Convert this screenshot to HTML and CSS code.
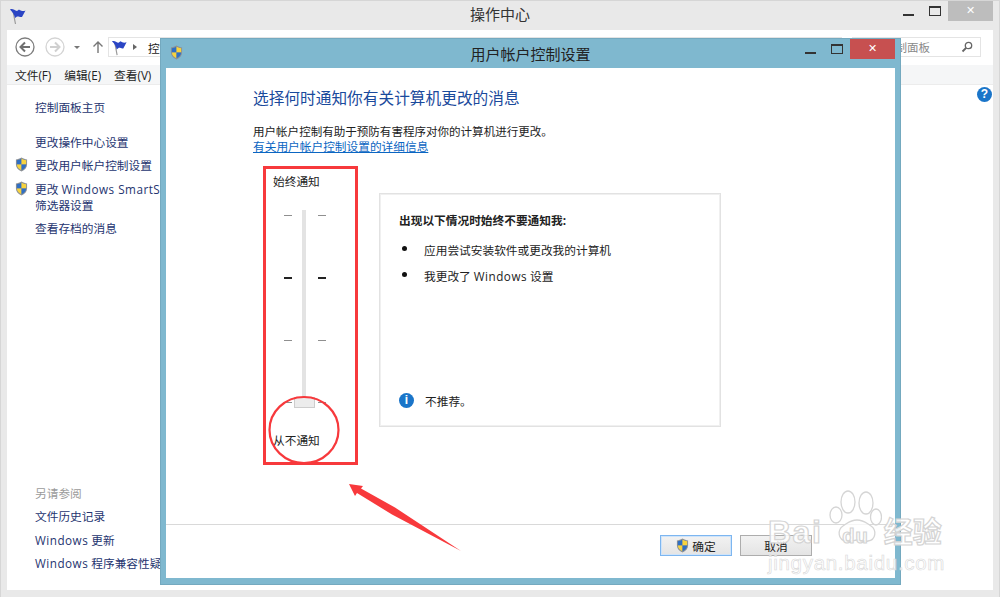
FILE: index.html
```html
<!DOCTYPE html>
<html lang="zh-CN">
<head>
  <meta charset="UTF-8">
  <title>用户帐户控制设置</title>
  <link rel="stylesheet" href="styles.css">
</head>
<body>
  <svg class="defs" width="0" height="0">
    <symbol id="shield" viewBox="0 0 14 16">
      <path d="M7 0.500C5 1.800 3 2.400 1 2.500V8c0 3.600 2.600 6 6 7.500 3.400-1.500 6-3.900 6-7.500V2.500C11 2.400 9 1.800 7 0.500z" fill="#8a8f96"/>
      <path d="M7 1.500V8H2V3.300C3.800 3.100 5.400 2.600 7 1.500z" fill="#2f6fc4"/>
      <path d="M7 1.500V8h5V3.300C10.200 3.100 8.600 2.600 7 1.500z" fill="#f7d33e"/>
      <path d="M2 8h5v6.300C4.200 13 2.200 11 2 8z" fill="#f7d33e"/>
      <path d="M12 8H7v6.300C9.800 13 11.800 11 12 8z" fill="#2f6fc4"/>
    </symbol>
    <symbol id="flag" viewBox="0 0 18 18">
      <path d="M4 4L6.500 17" stroke="#9a9a9a" stroke-width="1.200" fill="none"/>
      <path d="M1 2.500C3.500 1 5.500 3.500 8 4L10 2.500C12 4 14 4.500 16.500 3.500L13 10C11 10.500 9.500 9 8 9.500L6 11C5.500 8 3.500 5 1 2.500z" fill="#2b45c4"/>
    </symbol>
  </svg>

  <div class="window">
    <header class="titlebar">
      <svg class="title-flag"><use href="#flag"/></svg>
      <span class="title">操作中心</span>
      <div class="caption">
        <span class="cap-min"></span>
        <span class="cap-max"></span>
        <span class="cap-close">✕</span>
      </div>
    </header>

    <div class="client">
      <div class="toolbar">
        <svg class="nav-btn" viewBox="0 0 20 20">
          <circle cx="10" cy="10" r="9" fill="#fff" stroke="#7d7d7d" stroke-width="1.300"/>
          <path d="M15 10H6M10 5.500L5.500 10l4.500 4.500" fill="none" stroke="#6f6f6f" stroke-width="2"/>
        </svg>
        <svg class="nav-btn forward" viewBox="0 0 20 20">
          <circle cx="10" cy="10" r="9" fill="#fff" stroke="#d4d4d4" stroke-width="1.300"/>
          <path d="M5 10h9M10 5.500l4.500 4.500-4.500 4.500" fill="none" stroke="#d0d0d0" stroke-width="2"/>
        </svg>
        <span class="nav-drop"></span>
        <svg class="nav-up" viewBox="0 0 12 14">
          <path d="M6 13V2M1.500 6.500L6 2l4.500 4.500" fill="none" stroke="#777" stroke-width="1.400"/>
        </svg>
        <div class="address">
          <svg class="address-flag"><use href="#flag"/></svg>
          <span class="crumb-arrow"></span>
          <span>控制面板</span>
        </div>
        <div class="search">
          <span class="search-text">搜索控制面板</span>
          <svg class="search-icon" viewBox="0 0 12 12">
            <circle cx="7.500" cy="4.500" r="3.200" fill="none" stroke="#666" stroke-width="1.300"/>
            <path d="M5 7L1.500 10.500" stroke="#666" stroke-width="1.800"/>
          </svg>
        </div>
      </div>

      <nav class="menubar">
        <span>文件(F)</span>
        <span>编辑(E)</span>
        <span>查看(V)</span>
      </nav>

      <div class="content">
        <aside class="sidebar">
          <div class="side-group">
            <a class="side-home">控制面板主页</a>
            <a>更改操作中心设置</a>
            <a class="shielded"><svg class="side-shield"><use href="#shield"/></svg>更改用户帐户控制设置</a>
            <a class="shielded"><svg class="side-shield"><use href="#shield"/></svg>更改 <span class="latin">Windows SmartScreen</span><br>筛选器设置</a>
            <a>查看存档的消息</a>
          </div>
          <div class="side-group see-also">
            <span class="side-head">另请参阅</span>
            <a>文件历史记录</a>
            <a><span class="latin">Windows</span> 更新</a>
            <a><span class="latin">Windows</span> 程序兼容性疑难解答</a>
          </div>
        </aside>
        <div class="help">?</div>
      </div>
    </div>
  </div>

  <section class="dialog">
    <header class="dlg-titlebar">
      <svg class="dlg-shield"><use href="#shield"/></svg>
      <span class="dlg-title">用户帐户控制设置</span>
      <div class="caption dlg-caption">
        <span class="cap-min"></span>
        <span class="cap-max"></span>
        <span class="cap-close red">✕</span>
      </div>
    </header>

    <div class="dlg-client">
      <div class="dlg-main">
        <h1>选择何时通知你有关计算机更改的消息</h1>
        <p class="desc">用户帐户控制有助于预防有害程序对你的计算机进行更改。</p>
        <a class="more">有关用户帐户控制设置的详细信息</a>

        <div class="settings">
          <div class="slider-box">
            <div class="slider-label">始终通知</div>
            <div class="scale">
              <div class="ticks">
                <i></i><i class="major"></i><i></i><i></i>
              </div>
              <div class="track"></div>
              <div class="ticks">
                <i></i><i class="major"></i><i></i><i></i>
              </div>
              <div class="thumb"></div>
            </div>
            <div class="slider-label bottom">从不通知</div>
          </div>

          <div class="panel">
            <div class="panel-title">出现以下情况时始终不要通知我:</div>
            <ul>
              <li>应用尝试安装软件或更改我的计算机</li>
              <li>我更改了 <span class="latin">Windows</span> 设置</li>
            </ul>
            <div class="note">
              <span class="info">i</span>
              <span>不推荐。</span>
            </div>
          </div>
        </div>
      </div>

      <footer class="dlg-footer">
        <button class="btn primary"><svg class="btn-shield"><use href="#shield"/></svg>确定</button>
        <button class="btn">取消</button>
      </footer>
    </div>
  </section>

  <!-- red marks drawn on top of the screenshot -->
  <svg class="marks" viewBox="0 0 1000 597">
    <ellipse cx="304" cy="430" rx="34.500" ry="33" fill="none" stroke="#f7393c" stroke-width="2.200"/>
    <polygon points="349,484 363,486 361,488.500 395,507.500 461,551 392,514.500 357,493 355,496" fill="#f8393c"/>
  </svg>

  <div class="watermark">
    <svg class="paw" viewBox="0 0 54 55">
      <g fill="#fff" fill-opacity=".75" stroke="#d5d5d5" stroke-width="1.300">
        <ellipse cx="8" cy="25" rx="6" ry="8"/>
        <ellipse cx="20" cy="12" rx="7" ry="11"/>
        <ellipse cx="38" cy="13" rx="7" ry="11"/>
        <ellipse cx="48" cy="27" rx="5.500" ry="8"/>
        <path d="M29 30c-7 0-9 3-14 6-6 4-5 14 3 15 4 1 8-1 11-1s7 2 11 1c8-1 9-11 3-15-5-3-7-6-14-6z"/>
      </g>
    </svg>
    <div class="wm-line">
      <span class="wm-bai">Bai</span><span class="wm-du">du</span><span class="wm-cn">经验</span>
    </div>
    <div class="wm-url">jingyan.baidu.com</div>
  </div>
</body>
</html>
```

FILE: styles.css
```css
* {
  box-sizing: border-box;
}
html, body {
  margin: 0;
  height: 597px;
  overflow: hidden;
}
body {
  position: relative;
  width: 1000px;
  font-family: "Open Sans", "Noto Sans CJK SC", sans-serif;
  font-size: 11.7px;
  color: #222;
  background: #e9e9e9;
}
.defs {
  position: absolute;
}
.latin {
  letter-spacing: .5px;
}

/* back window */
.window {
  height: 597px;
  display: flex;
  flex-direction: column;
  border: 1px solid #d6d6d6;
  border-bottom: 0;
  background: #e9e9e9;
}
.titlebar {
  position: relative;
  height: 29px;
  flex: none;
  display: flex;
  align-items: center;
  justify-content: center;
  padding-bottom: 4px;
}
.title-flag {
  position: absolute;
  left: 8px;
  top: 6px;
  width: 18px;
  height: 18px;
}
.title {
  font-size: 15px;
  color: #333;
}
.caption {
  position: absolute;
  right: 6px;
  top: 0;
  display: flex;
}
.cap-min, .cap-max {
  position: relative;
  display: block;
  width: 33px;
  height: 20px;
}
.cap-min::after {
  content: "";
  position: absolute;
  left: 21px;
  top: 13px;
  width: 11px;
  height: 2px;
  background: #333;
}
.cap-max::after {
  content: "";
  position: absolute;
  left: 14px;
  top: 5px;
  width: 10px;
  height: 7px;
  border: 1px solid #333;
  border-top-width: 2px;
}
.cap-close {
  width: 45px;
  height: 20px;
  background: #bdbdbd;
  color: #fff;
  font: bold 11px/20px "DejaVu Sans", sans-serif;
  text-align: center;
}
.cap-close.red {
  background: #c75050;
}
.client {
  flex: 1;
  margin: 0 6px 7px;
  background: #fff;
  display: flex;
  flex-direction: column;
  min-height: 0;
}
.toolbar {
  height: 35px;
  flex: none;
  display: flex;
  align-items: center;
  padding: 0 0 1px 8px;
}
.nav-btn {
  width: 20px;
  height: 20px;
}
.nav-btn.forward {
  margin-left: 10px;
}
.nav-drop {
  width: 0;
  height: 0;
  margin-left: 9px;
  border: 3px solid transparent;
  border-top: 3px solid #777;
  border-bottom: 0;
}
.nav-up {
  width: 12px;
  height: 14px;
  margin-left: 12px;
}
.address {
  width: 734px;
  height: 20px;
  margin-left: 4px;
  display: flex;
  align-items: center;
  gap: 5px;
  padding-left: 2px;
  border: 1px solid #e4e4e4;
  overflow: hidden;
}
.address-flag {
  width: 17px;
  height: 17px;
}
.crumb-arrow {
  width: 0;
  height: 0;
  border: 3.500px solid transparent;
  border-left: 4px solid #666;
  border-right: 0;
  margin-right: 6px;
}
.search {
  width: 129px;
  height: 20px;
  margin-left: 10px;
  display: flex;
  align-items: center;
  justify-content: space-between;
  padding: 0 7px 0 8px;
  border: 1px solid #e4e4e4;
  color: #8a8a8a;
  font-size: 11.500px;
}
.search-icon {
  width: 12px;
  height: 12px;
}
.menubar {
  height: 20px;
  flex: none;
  display: flex;
  align-items: center;
  gap: 13px;
  padding-left: 8px;
  background: #f5f6f7;
  border-bottom: 1px solid #ececec;
}
.content {
  position: relative;
  flex: 1;
  min-height: 0;
}
.sidebar {
  width: 153px;
  height: 100%;
  padding: 14px 0 19px 28px;
  display: flex;
  flex-direction: column;
  justify-content: space-between;
  white-space: nowrap;
  color: #25346f;
}
.side-group {
  display: flex;
  flex-direction: column;
  gap: 7px;
  line-height: 16px;
}
.side-group.see-also {
  gap: 7.500px;
}
.side-home {
  margin-bottom: 12px;
}
.side-head {
  color: #9b9b9b;
}
.shielded {
  position: relative;
}
.shielded + .shielded {
  margin-top: 1px;
}
.side-shield {
  position: absolute;
  left: -20px;
  top: 0;
  width: 13px;
  height: 15px;
}
.help {
  position: absolute;
  right: 1px;
  top: 2px;
  width: 15px;
  height: 15px;
  border-radius: 50%;
  background: #1a75c9;
  color: #fff;
  font: bold 12px/15px "Liberation Sans", sans-serif;
  text-align: center;
}

/* dialog on top */
.dialog {
  position: absolute;
  left: 160px;
  top: 38px;
  width: 741px;
  height: 547px;
  display: flex;
  flex-direction: column;
  background: #7fb8cf;
  border: 1px solid #74a9bf;
  padding: 0 5px 6px 5px;
}
.dlg-titlebar {
  position: relative;
  height: 29px;
  flex: none;
  display: flex;
  align-items: center;
  justify-content: center;
  padding-bottom: 1px;
}
.dlg-shield {
  position: absolute;
  left: 4px;
  top: 6px;
  width: 13px;
  height: 15px;
}
.dlg-title {
  font-size: 15px;
  color: #222;
}
.dlg-caption {
  right: 0;
}
.dlg-client {
  flex: 1;
  min-height: 0;
  display: flex;
  flex-direction: column;
  background: #fff;
}
.dlg-main {
  flex: 1;
  padding: 19px 0 0 87px;
}
h1 {
  margin: 0;
  font-size: 15.700px;
  font-weight: 400;
  line-height: 23px;
  color: #1a4a9c;
}
.desc {
  margin: 14px 0 0;
  line-height: 15px;
  font-size: 11.540px;
}
.more {
  display: block;
  line-height: 15px;
  color: #0b66c2;
  text-decoration: underline;
}
.settings {
  display: flex;
  margin: 12px 0 0 10px;
}
.slider-box {
  width: 95px;
  height: 299px;
  padding: 4px 0 0 7px;
  border: 3px solid #f7393c;
}
.slider-label {
  line-height: 16px;
}
.slider-label.bottom {
  margin-top: 24px;
}
.scale {
  position: relative;
  height: 198px;
  margin: 21px 0 0 11px;
  display: flex;
}
.ticks {
  width: 8px;
  padding: 5px 0;
  display: flex;
  flex-direction: column;
  justify-content: space-between;
}
.ticks i {
  display: block;
  height: 1px;
  background: #8f8f8f;
}
.ticks i.major {
  height: 2px;
  background: #222;
}
.track {
  width: 4px;
  height: 194px;
  margin: 0 12px 0 10px;
  background: #e3e3e3;
}
.thumb {
  position: absolute;
  left: 10px;
  bottom: 0;
  width: 21px;
  height: 11px;
  background: #ececec;
  border: 1px solid #cdcdcd;
}
.panel {
  position: relative;
  width: 342px;
  height: 234px;
  margin: 27px 0 0 21px;
  padding: 18px 0 0 19px;
  border: 1px solid #e2e2e2;
  box-shadow: inset 0 0 0 1px #f0f0f0;
}
.panel-title {
  font-weight: 700;
  line-height: 16px;
}
ul {
  margin: 14px 0 0;
  padding: 0;
  list-style: none;
}
li {
  position: relative;
  padding-left: 25px;
  height: 26px;
  line-height: 16px;
}
li::before {
  content: "";
  position: absolute;
  left: 3px;
  top: 4px;
  width: 5px;
  height: 5px;
  border-radius: 50%;
  background: #111;
}
.note {
  position: absolute;
  left: 19px;
  top: 198px;
  display: flex;
  align-items: center;
  gap: 11px;
}
.info {
  width: 15px;
  height: 15px;
  border-radius: 50%;
  background: #1a75c9;
  color: #fff;
  font: bold 12px/15px "Liberation Sans", sans-serif;
  text-align: center;
}
.dlg-footer {
  height: 54px;
  flex: none;
  display: flex;
  gap: 8px;
  justify-content: flex-end;
  padding: 10px 83px 0 0;
  border-top: 1px solid #d9d9d9;
}
.btn {
  width: 72px;
  height: 21px;
  padding: 0;
  display: flex;
  align-items: center;
  justify-content: center;
  gap: 3px;
  font: 11.700px "Noto Sans CJK SC", sans-serif;
  color: #222;
  background: linear-gradient(#f2f2f2, #e4e4e4);
  border: 1px solid #adadad;
}
.btn.primary {
  border-color: #7db6f0;
  box-shadow: inset 0 0 0 1px #cfe4fa;
}
.btn-shield {
  width: 13px;
  height: 15px;
}

/* annotations and watermark */
.marks {
  position: absolute;
  left: 0;
  top: 0;
  width: 1000px;
  height: 597px;
  pointer-events: none;
}
.watermark {
  position: absolute;
  left: 766px;
  top: 488px;
  width: 190px;
  height: 90px;
  pointer-events: none;
}
.paw {
  position: absolute;
  left: 62px;
  top: 2px;
  width: 54px;
  height: 55px;
}
.wm-line {
  position: absolute;
  left: 2px;
  top: 21px;
  display: flex;
  align-items: baseline;
  white-space: nowrap;
  color: rgba(255, 255, 255, .85);
  -webkit-text-stroke: 1.200px #d4d4d4;
  font-family: "Liberation Sans", sans-serif;
  font-weight: 700;
}
.wm-bai {
  font-size: 32px;
  letter-spacing: 1.500px;
}
.wm-du {
  font-size: 20px;
  letter-spacing: 1px;
  margin-left: 20px;
}
.wm-cn {
  font: 700 29px "Noto Sans CJK SC", sans-serif;
  margin-left: 15px;
}
.wm-url {
  position: absolute;
  left: 2px;
  top: 63px;
  font: 20.500px "Liberation Sans", sans-serif;
  letter-spacing: .7px;
  white-space: nowrap;
  color: rgba(255, 255, 255, .7);
  -webkit-text-stroke: .6px #d8d8d8;
}
```
